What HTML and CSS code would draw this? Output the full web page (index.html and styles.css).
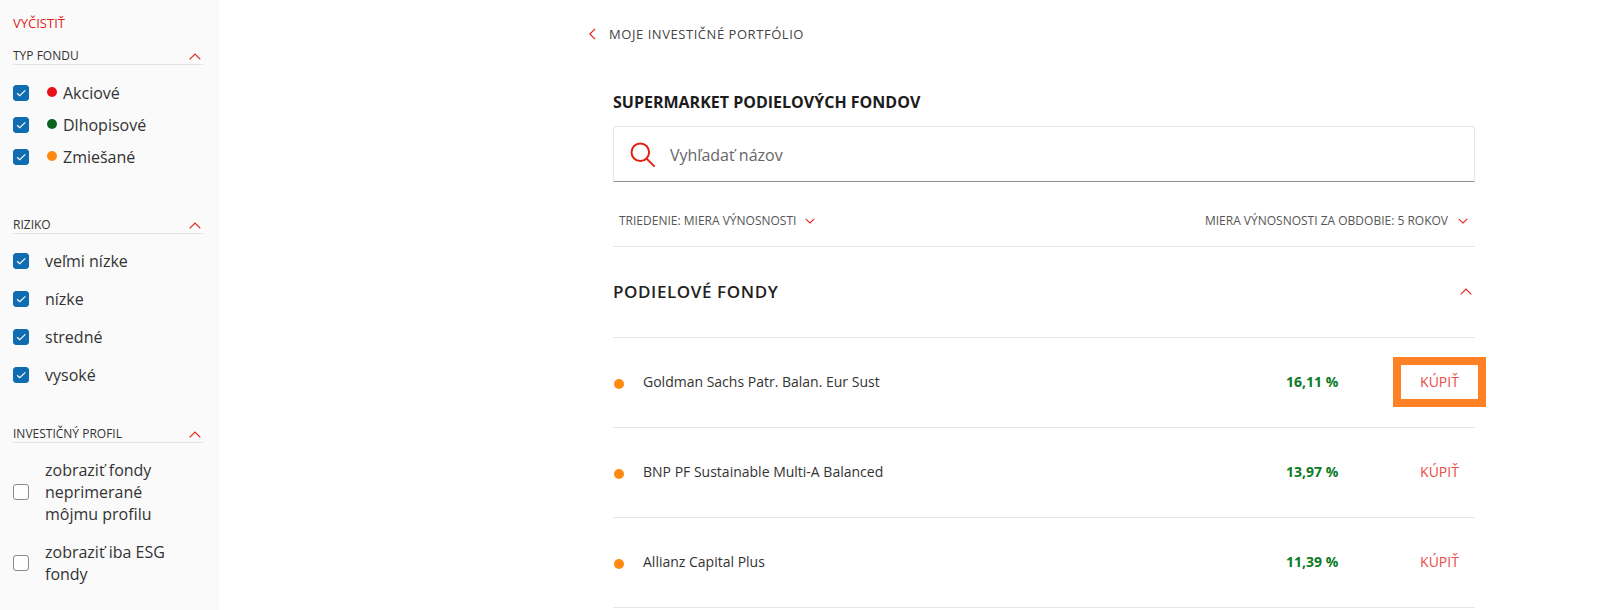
FILE: index.html
```html
<!DOCTYPE html>
<html lang="sk">
<head>
<meta charset="utf-8">
<title>Supermarket podielových fondov</title>
<link rel="stylesheet" href="styles.css">
</head>
<body>
<div class="page">
  <aside class="sidebar">
    <a class="clear">VYČISTIŤ</a>
    <section class="filter filter-type">
      <div class="filter-head"><span>TYP FONDU</span><svg class="chev" viewBox="0 0 12 7"><path d="M.7 6.3 6 1l5.3 5.3"/></svg></div>
      <ul class="opts opts-type">
        <li><span class="cb on"><svg viewBox="0 0 16 16"><path d="M3.5 8.3l3 2.8L13 5"/></svg></span><i class="dot red"></i>Akciové</li>
        <li><span class="cb on"><svg viewBox="0 0 16 16"><path d="M3.5 8.3l3 2.8L13 5"/></svg></span><i class="dot green"></i>Dlhopisové</li>
        <li><span class="cb on"><svg viewBox="0 0 16 16"><path d="M3.5 8.3l3 2.8L13 5"/></svg></span><i class="dot orange"></i>Zmiešané</li>
      </ul>
    </section>
    <section class="filter filter-risk">
      <div class="filter-head"><span>RIZIKO</span><svg class="chev" viewBox="0 0 12 7"><path d="M.7 6.3 6 1l5.3 5.3"/></svg></div>
      <ul class="opts opts-risk">
        <li><span class="cb on"><svg viewBox="0 0 16 16"><path d="M3.5 8.3l3 2.8L13 5"/></svg></span>veľmi nízke</li>
        <li><span class="cb on"><svg viewBox="0 0 16 16"><path d="M3.5 8.3l3 2.8L13 5"/></svg></span>nízke</li>
        <li><span class="cb on"><svg viewBox="0 0 16 16"><path d="M3.5 8.3l3 2.8L13 5"/></svg></span>stredné</li>
        <li><span class="cb on"><svg viewBox="0 0 16 16"><path d="M3.5 8.3l3 2.8L13 5"/></svg></span>vysoké</li>
      </ul>
    </section>
    <section class="filter filter-profile">
      <div class="filter-head"><span>INVESTIČNÝ PROFIL</span><svg class="chev" viewBox="0 0 12 7"><path d="M.7 6.3 6 1l5.3 5.3"/></svg></div>
      <ul class="opts opts-profile">
        <li><span class="cb"></span><span class="wrap">zobraziť fondy neprimerané môjmu profilu</span></li>
        <li><span class="cb"></span><span class="wrap">zobraziť iba ESG fondy</span></li>
      </ul>
    </section>
  </aside>
  <main class="main">
    <a class="back"><svg viewBox="0 0 7 12"><path d="M6 .8.9 6 6 11.2"/></svg>MOJE INVESTIČNÉ PORTFÓLIO</a>
    <div class="content">
      <h1>SUPERMARKET PODIELOVÝCH FONDOV</h1>
      <div class="search">
        <svg viewBox="0 0 26 26"><circle cx="10.3" cy="10.3" r="8.8"/><path d="M16.6 16.6 24.6 24.6"/></svg>
        <span>Vyhľadať názov</span>
      </div>
      <div class="sort">
        <span class="sort-item">TRIEDENIE: MIERA VÝNOSNOSTI<svg viewBox="0 0 10 6"><path d="M.7.8 5 5 9.3.8"/></svg></span>
        <span class="sort-item sort-period">MIERA VÝNOSNOSTI ZA OBDOBIE: 5 ROKOV<svg viewBox="0 0 10 6"><path d="M.7.8 5 5 9.3.8"/></svg></span>
      </div>
      <div class="group">
        <h2>PODIELOVÉ FONDY</h2>
        <svg viewBox="0 0 12 7"><path d="M.7 6.3 6 1l5.3 5.3"/></svg>
      </div>
      <div class="row">
        <i class="dot orange"></i><span class="name">Goldman Sachs Patr. Balan. Eur Sust</span><b class="pct">16,11 %</b><a class="buy marked">KÚPIŤ</a>
      </div>
      <div class="row">
        <i class="dot orange"></i><span class="name">BNP PF Sustainable Multi-A Balanced</span><b class="pct">13,97 %</b><a class="buy">KÚPIŤ</a>
      </div>
      <div class="row">
        <i class="dot orange"></i><span class="name">Allianz Capital Plus</span><b class="pct">11,39 %</b><a class="buy">KÚPIŤ</a>
      </div>
    </div>
  </main>
</div>
</body>
</html>
```
FILE: styles.css
```css
* { box-sizing: border-box; }
html, body { margin: 0; height: 610px; overflow: hidden; background: #fff; }
body { font-family: "Open Sans", "Noto Sans", sans-serif; color: #222; }
ul { list-style: none; margin: 0; padding: 0; }
.page { display: flex; height: 610px; }

.sidebar { width: 219px; flex: none; background: #fafafa; padding: 15px 16px 0 13px; }
.clear { display: block; font-size: 13px; line-height: 16px; color: #e2231a; }
.filter-head { display: flex; justify-content: space-between; align-items: center; height: 19px; border-bottom: 1px solid #e3e3e3; font-size: 12px; line-height: 16px; color: #333; padding-top: 2px; }
.chev { width: 12px; height: 7px; margin-right: 2px; margin-top: 1px; fill: none; stroke: #e2231a; stroke-width: 1.2; }
.filter-type { margin-top: 15px; }
.filter-risk { margin-top: 42px; }
.filter-profile { margin-top: 30px; }
.opts li { display: flex; align-items: center; font-size: 16px; color: #333; }
.opts-type { margin-top: 12px; }
.opts-type li { height: 32px; }
.opts-risk { margin-top: 8px; }
.opts-risk li { height: 38px; }
.opts-profile { margin-top: 16px; }
.opts-profile li { margin-bottom: 16px; line-height: 22px; }
.cb { width: 16px; height: 16px; flex: none; border: 1px solid #8a8a8a; border-radius: 3px; background: #fff; margin-right: 16px; }
.cb.on { background: #0f6cb0; border-color: #0f6cb0; }
.cb svg { display: block; width: 14px; height: 14px; fill: none; stroke: #fff; stroke-width: 1.3; }
.wrap { width: 140px; }
.dot { display: inline-block; width: 10px; height: 10px; border-radius: 50%; flex: none; }
.opts-type .dot { margin: -3px 6px 0 2px; }
.red { background: #e8101a; }
.green { background: #0b6420; }
.orange { background: #ff8a0f; }

.main { flex: 1; padding-left: 370px; padding-top: 25px; }
.back { display: flex; align-items: center; font-size: 13px; line-height: 18px; letter-spacing: .55px; color: #444; }
.back svg { width: 7px; height: 12px; margin-right: 13px; fill: none; stroke: #e2231a; stroke-width: 1.2; }
.content { width: 862px; margin-left: 24px; }
h1 { margin: 49px 0 0; font-size: 16px; line-height: 20px; font-weight: 700; color: #1c1c1c; }
.search { display: flex; align-items: center; height: 56px; margin-top: 14px; border: 1px solid #e6e6e6; border-bottom: 1px solid #8c8c8c; border-radius: 3px 3px 0 0; padding: 2px 0 0 16px; font-size: 16px; color: #666; }
.search svg { width: 26px; height: 26px; margin-right: 14px; fill: none; stroke: #e2200f; stroke-width: 2; }
.sort { display: flex; justify-content: space-between; align-items: center; height: 65px; border-bottom: 1px solid #e6e6e6; padding: 13px 7px 0 6px; font-size: 12px; color: #555; }
.sort-item svg { width: 10px; height: 6px; margin-left: 9px; fill: none; stroke: #e2231a; stroke-width: 1.1; vertical-align: 1px; }
.sort-period svg { margin-left: 10px; }
.group { display: flex; justify-content: space-between; align-items: center; height: 91px; border-bottom: 1px solid #e6e6e6; padding-bottom: 2px; }
h2 { margin: 0; font-size: 17px; font-weight: 600; letter-spacing: .6px; color: #222; }
.group svg { width: 12px; height: 7px; margin: 1px 3px 0 0; fill: none; stroke: #e2231a; stroke-width: 1.2; }
.row { display: flex; align-items: center; height: 90px; border-bottom: 1px solid #e6e6e6; font-size: 14px; color: #333; padding-bottom: 2px; }
.row .dot { margin: 5px 0 0 1px; }
.name { margin-left: 19px; flex: 1; }
.pct { color: #0e7a25; font-size: 14px; font-weight: 700; width: 52px; white-space: nowrap; }
.buy { width: 77px; margin: 0 -3px 0 63px; font-size: 14px; color: #ea4b45; text-align: center; line-height: 34px; }
.marked { outline: 8px solid #ff8126; }
```
